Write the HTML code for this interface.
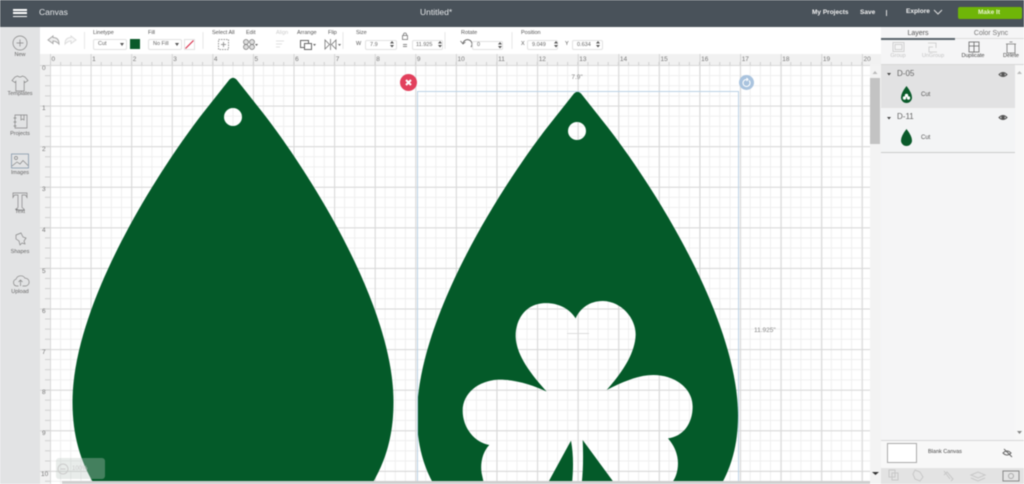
<!DOCTYPE html>
<html><head><meta charset="utf-8"><style>
html,body{margin:0;padding:0;width:1024px;height:484px;overflow:hidden;background:#fff;font-family:"Liberation Sans",sans-serif}
.a{position:absolute}
.t{position:absolute;white-space:nowrap;line-height:1;color:#555;font-size:5.5px}
.c{transform:translateX(-50%)}
.rh,.rv{position:absolute;white-space:nowrap;line-height:1;color:#777;font-size:6.5px}
.rh{top:57px}
.rv{left:42px}
.inp{position:absolute;background:#fff;border:1px solid #e2e2e2;border-radius:2px;box-sizing:border-box;height:10px;font-size:5.5px;line-height:8px;color:#666;padding-left:4px}
#wrap{position:relative;width:1024px;height:484px;overflow:hidden;filter:blur(.45px)}
</style></head><body><div id="wrap">
<div class="a" style="left:0;top:0;width:1024px;height:27px;background:#49525a"></div>
<div class="a" style="left:13px;top:9px;width:14px;height:1.500px;background:#fff"></div>
<div class="a" style="left:13px;top:12px;width:14px;height:1.500px;background:#fff"></div>
<div class="a" style="left:13px;top:15.500px;width:14px;height:1.500px;background:#fff"></div>
<div class="t" style="left:39px;top:7.500px;font-size:8.500px;color:#e6e8ea">Canvas</div>
<div class="t" style="left:420px;top:7.500px;font-size:8.500px;color:#e6e8ea">Untitled*</div>
<div class="t" style="left:812px;top:9.500px;font-size:6.500px;color:#f2f2f2;font-weight:bold">My Projects</div>
<div class="t" style="left:860px;top:9.500px;font-size:6.500px;color:#f2f2f2;font-weight:bold">Save</div>
<div class="a" style="left:886px;top:10px;width:1px;height:6px;background:#ddd"></div>
<div class="t" style="left:906px;top:9px;font-size:6.500px;color:#f2f2f2;font-weight:bold">Explore</div>
<svg class="a" style="left:933px;top:9px" width="10" height="6"><path d="M1 1L5 5L9 1" fill="none" stroke="#ddd" stroke-width="1"/></svg>
<div class="a" style="left:958px;top:7px;width:64px;height:12px;background:#6fb508;border-radius:2px"></div>
<div class="t c" style="left:989px;top:10px;font-size:6.500px;color:#e8f3d0;font-weight:bold">Make It</div>

<div class="a" style="left:0;top:27px;width:40px;height:457px;background:#e2e3e4"></div>
<div class="a" style="left:40px;top:27px;width:841px;height:27px;background:#fff"></div>

<svg class="a" style="left:0;top:27px" width="40" height="290" fill="none" stroke="#858585" stroke-width=".7">
<circle cx="20" cy="16" r="7"/><path d="M20 12.500v7M16.500 16h7"/>
<path d="M15 50l-3 3.500 3 2 .8-1.200V64h8.400V54.300l.8 1.200 3-2L25 50l-2.500-1q-2.500 2-5 0z"/>
<path d="M15 88h12v13H15zM13.500 91h3M13.500 95h3M13.500 99h3M21 88v5l1.500-1 1.500 1v-5"/>
<rect x="11.500" y="127" width="17" height="14" stroke="#7a8ea3"/><circle cx="16" cy="131" r="1.500"/><path d="M12 139l5-4 3 2 3-3.500 5 5"/>
<path d="M13 166h14v4.500l-1.500-2.500h-3.500v12.500l2 1.500v1h-8v-1l2-1.500V168h-3.500L13 170.500z"/>
<path d="M16 208l5-2 2 4 3 1-2 3 1 3-3-1-2 2-1-4-3-2z"/>
<path d="M16.500 259a3.500 3.500 0 0 1-.5-6.800a5 5 0 0 1 9-1a3.800 3.800 0 0 1 .5 7.800h-3M20.500 259v-6M18.500 255l2-2 2 2M16.500 259h2"/>
</svg>
<div class="t c" style="left:20px;top:53px;color:#666">New</div>
<div class="t c" style="left:20px;top:92px;color:#666">Templates</div>
<div class="t c" style="left:20px;top:132px;color:#666">Projects</div>
<div class="t c" style="left:20px;top:171px;color:#666">Images</div>
<div class="t c" style="left:20px;top:210px;color:#666">Text</div>
<div class="t c" style="left:20px;top:250px;color:#666">Shapes</div>
<div class="t c" style="left:20px;top:290px;color:#666">Upload</div>

<svg class="a" style="left:40px;top:27px" width="841" height="27" fill="none" stroke="#bbb" stroke-width="1">
<path d="M13 9l-5 4 5 3.500v-2.500q3 0 6 3q0-6.500-6-6.500z" fill="#eee" stroke="#aaa"/>
<path d="M31 9l5 4-5 3.500v-2.500q-3 0-6 3q0-6.500 6-6.500z" fill="#f8f8f8" stroke="#ddd"/>
<path d="M44.500 5v17M163 5v17M303 5v17M405 5v17M472 5v17" stroke="#e8e8e8"/>
<rect x="178.500" y="12.500" width="10" height="10" stroke="#999" stroke-dasharray="1.500 1"/><path d="M183.500 15v5M181 17.500h5" stroke="#999"/>
<g stroke="#777" fill="#ddd" stroke-width=".7"><circle cx="206" cy="15" r="2.500"/><circle cx="212" cy="15" r="2.500"/><circle cx="206" cy="20" r="2.500"/><circle cx="212" cy="20" r="2.500"/></g>
<path d="M236 14h8M236 17h6M236 20h4" stroke="#e0e0e0"/>
<rect x="260.500" y="13.500" width="8" height="7" stroke="#666"/><rect x="264.500" y="16.500" width="7" height="6" stroke="#666" fill="#fff"/>
<path d="M285 13v9l4.500-4.500zM296 13v9l-4.500-4.500zM290.500 12v11" stroke="#777" stroke-width=".8"/>
<path d="M215 17l3 0-1.500 2zM273 17l3 0-1.500 2zM298 17l3 0-1.500 2z" fill="#666" stroke="none"/>
<path d="M423 17a4.500 4.500 0 1 1 8 3" stroke="#666"/><path d="M420.500 14l2.500 3 2.500-2" stroke="#666" stroke-width=".8"/>
</svg>
<div class="t" style="left:93px;top:31px">Linetype</div>
<div class="inp" style="left:93px;top:39px;width:34px;height:11px;line-height:9px">Cut</div>
<div class="a" style="left:120px;top:43px;border:2px solid transparent;border-top:3px solid #555;border-bottom:0"></div>
<div class="a" style="left:130px;top:39px;width:10px;height:10px;background:#0b5a2a"></div>
<div class="t" style="left:148px;top:31px">Fill</div>
<div class="inp" style="left:148px;top:39px;width:34px;height:11px;line-height:9px">No Fill</div>
<div class="a" style="left:175px;top:43px;border:2px solid transparent;border-top:3px solid #555;border-bottom:0"></div>
<svg class="a" style="left:184px;top:39px" width="11" height="11"><rect x=".5" y=".5" width="10" height="10" fill="#fff" stroke="#e2e2e2"/><path d="M1.500 9.500L9.500 1.500" stroke="#d8344f" stroke-width="1.200"/></svg>
<div class="t" style="left:212px;top:31px">Select All</div>
<div class="t" style="left:246px;top:31px">Edit</div>
<div class="t" style="left:276px;top:31px;color:#ccc">Align</div>
<div class="t" style="left:297px;top:31px">Arrange</div>
<div class="t" style="left:328px;top:31px">Flip</div>
<div class="t" style="left:356px;top:31px">Size</div>
<div class="t" style="left:356px;top:42px">W</div>
<div class="inp" style="left:365px;top:39.500px;width:32px;height:10px;line-height:8px">7.9</div>
<div class="a" style="left:403px;top:44px;width:4px;height:1px;background:#888"></div>
<div class="a" style="left:403px;top:46px;width:4px;height:1px;background:#888"></div>
<div class="inp" style="left:412px;top:39.500px;width:31px;height:10px;line-height:8px;padding-left:3px">11.925</div>
<svg class="a" style="left:401px;top:32px" width="8" height="8" fill="none" stroke="#777" stroke-width=".8"><rect x="1.500" y="3.500" width="5" height="4"/><path d="M2.500 3.500v-1a1.500 1.500 0 0 1 3 0v1"/></svg>
<div class="t" style="left:461px;top:31px">Rotate</div>
<div class="inp" style="left:472px;top:41px;width:31px;height:9px;line-height:7px">0</div>
<div class="t" style="left:521px;top:31px">Position</div>
<div class="t" style="left:521px;top:42px">X</div>
<div class="inp" style="left:527px;top:39.500px;width:31px;height:10px;line-height:8px">9.049</div>
<div class="t" style="left:565px;top:42px">Y</div>
<div class="inp" style="left:572px;top:39.500px;width:31px;height:10px;line-height:8px">0.634</div>
<svg class="a" style="left:380px;top:39px" width="230" height="12" fill="#555"><path d="M10 4.500l2-2.500 2 2.500zM10 6l2 2.500 2-2.500zM58 4.500l2-2.500 2 2.500zM58 6l2 2.500 2-2.500zM118 5.500l2-2.500 2 2.500zM118 7l2 2.500 2-2.500zM174 4.500l2-2.500 2 2.500zM174 6l2 2.500 2-2.500zM216 4.500l2-2.500 2 2.500zM216 6l2 2.500 2-2.500z"/></svg>

<div class="a" style="left:40px;top:54px;width:841px;height:11px;background:#f1f1f1"></div>
<div class="a" style="left:40px;top:65px;width:10px;height:419px;background:#f1f1f1"></div>
<div class="a" style="left:50px;top:65px;width:820px;height:419px;background-color:#fff;background-image:linear-gradient(90deg,#d8d8d8 1px,transparent 1px),linear-gradient(#d8d8d8 1px,transparent 1px),linear-gradient(90deg,#efefef 1px,transparent 1px),linear-gradient(#efefef 1px,transparent 1px);background-size:40.6px 40.6px,40.6px 40.6px,10.15px 10.15px,10.15px 10.15px"></div>
<div class="a" style="left:50px;top:54px;width:820px;height:11px;background-image:linear-gradient(90deg,#d4d4d4 1px,transparent 1px);background-size:40.6px 11px"></div>
<div class="a" style="left:50px;top:62px;width:820px;height:3px;background-image:linear-gradient(90deg,#cfcfcf 1px,transparent 1px);background-size:10.15px 3px"></div>
<div class="a" style="left:40px;top:65px;width:10px;height:419px;background-image:linear-gradient(#d4d4d4 1px,transparent 1px);background-size:10px 40.6px"></div>
<div class="a" style="left:45px;top:65px;width:5px;height:419px;background-image:linear-gradient(#cfcfcf 1px,transparent 1px);background-size:5px 10.15px"></div>

<div class="rh" style="left:51.500px">0</div><div class="rh" style="left:92.100px">1</div><div class="rh" style="left:132.700px">2</div><div class="rh" style="left:173.300px">3</div><div class="rh" style="left:213.900px">4</div><div class="rh" style="left:254.500px">5</div><div class="rh" style="left:295.100px">6</div><div class="rh" style="left:335.700px">7</div><div class="rh" style="left:376.300px">8</div><div class="rh" style="left:416.900px">9</div><div class="rh" style="left:457.500px">10</div><div class="rh" style="left:498.100px">11</div><div class="rh" style="left:538.700px">12</div><div class="rh" style="left:579.300px">13</div><div class="rh" style="left:619.900px">14</div><div class="rh" style="left:660.500px">15</div><div class="rh" style="left:701.100px">16</div><div class="rh" style="left:741.700px">17</div><div class="rh" style="left:782.300px">18</div><div class="rh" style="left:822.900px">19</div><div class="rh" style="left:863.500px">20</div>
<div class="rv" style="top:65.500px">0</div><div class="rv" style="top:106.100px">1</div><div class="rv" style="top:146.700px">2</div><div class="rv" style="top:187.300px">3</div><div class="rv" style="top:227.900px">4</div><div class="rv" style="top:268.500px">5</div><div class="rv" style="top:309.100px">6</div><div class="rv" style="top:349.700px">7</div><div class="rv" style="top:390.300px">8</div><div class="rv" style="top:430.900px">9</div><div class="rv" style="top:471.500px;left:41px">10</div>

<svg class="a" style="left:0;top:0" width="870" height="484">
<defs>
<mask id="m1" maskUnits="userSpaceOnUse" x="0" y="0" width="870" height="484"><rect width="870" height="484" fill="#fff"/><circle cx="233" cy="117" r="9" fill="#000"/></mask>
<mask id="m2" maskUnits="userSpaceOnUse" x="0" y="0" width="870" height="484"><rect width="870" height="484" fill="#fff"/><circle cx="577" cy="131" r="9" fill="#000"/>
<path transform="translate(440,290) scale(.3333)" fill="#000" d="M407 85C385 50 345 36 305 40C255 45 226 90 227 140C229 200 280 260 320 305C280 285 225 268 175 269C115 272 68 310 68 362C68 415 105 458 148 465C128 485 120 520 125 550L132 582L322 582L393 452C400 490 401 530 396 582L425 582C430 540 430 490 428 450L525 582L692 582C710 565 718 530 712 500C707 475 695 458 684 445C730 440 758 400 758 350C758 295 705 255 640 255C590 255 540 280 500 300C540 255 585 195 587 135C588 85 545 35 490 33C450 32 420 55 407 85Z"/>
</mask>
</defs>
<g mask="url(#m1)"><path transform="translate(233,77)" fill="#045a29" d="M-3.500 2.500Q0 -1 3.500 2.500L30 36C72 90 160.500 225 160.500 325C160.500 360 152 385 139 407L-139 407C-152 385 -160.500 360 -160.500 325C-160.500 225 -72 90 -30 36Z"/></g>
<g mask="url(#m2)"><path transform="translate(577.500,91)" fill="#045a29" d="M-3.500 2.500Q0 -1 3.500 2.500L30 36C72 90 160.500 225 160.500 325C160.500 355 153 377 144 393L-144 393C-153 377 -160.500 355 -160.500 325C-160.500 225 -72 90 -30 36Z"/></g>
<path d="M417.500 484V91.500H738.500V484" fill="none" stroke="#bcd3e6" stroke-width="1"/>
<path d="M567 333.500h22" stroke="#ddd" stroke-width="1"/>
<circle cx="408.500" cy="82.500" r="8.500" fill="#e2405c"/><path d="M406 80l5 5M411 80l-5 5" stroke="#fff" stroke-width="2"/>
<circle cx="746.500" cy="82.500" r="7.500" fill="#a9c3de"/><path d="M749 80.500a3.500 3.500 0 1 1-2-1M746.500 78l1.500 1.500-1.500 1.500" fill="none" stroke="#fff" stroke-width="1"/>
</svg>
<div class="t c" style="left:577px;top:75px;color:#888;font-size:6.500px">7.9"</div>
<div class="t" style="left:754px;top:328px;color:#888;font-size:6.500px">11.925"</div>

<div class="a" style="left:56px;top:458px;width:49px;height:21px;border-radius:3px;background:rgba(190,200,195,.35)"></div>
<svg class="a" style="left:57px;top:463px" width="12" height="12"><circle cx="6" cy="6" r="5" fill="none" stroke="#ccc"/><path d="M3.500 6h5" stroke="#ccc"/></svg>
<div class="t" style="left:72px;top:466px;color:#ccc;font-size:6px">100%</div>
<div class="a" style="left:62px;top:481px;width:808px;height:3px;background:#cfcfcf"></div>

<div class="a" style="left:870px;top:65px;width:11px;height:419px;background:#f3f3f3"></div>
<div class="a" style="left:870px;top:78px;width:10px;height:66px;background:#c3c3c3"></div>
<svg class="a" style="left:870px;top:70px" width="11" height="6"><path d="M2.500 4L5 1l2.500 3z" fill="#bbb"/></svg>

<div class="a" style="left:881px;top:27px;width:143px;height:457px;background:#f5f5f6"></div>
<div class="a" style="left:881px;top:38px;width:74px;height:1.500px;background:#5a646c"></div>
<div class="a" style="left:955px;top:38px;width:69px;height:1px;background:#ddd"></div>
<div class="t c" style="left:918px;top:30px;font-size:7px">Layers</div>
<div class="t c" style="left:991px;top:30px;font-size:7px;color:#777">Color Sync</div>
<svg class="a" style="left:881px;top:40px" width="143" height="20" fill="none" stroke="#c8c8c8" stroke-width=".8">
<rect x="12" y="2.500" width="11" height="9"/><rect x="14" y="4.500" width="7" height="5"/>
<path d="M47 3h8v5M52 7h-4v5h8"/>
<rect x="88" y="2" width="10" height="10" stroke="#666"/><path d="M88 6h10M93 2v10" stroke="#666"/>
<path d="M125 4h10M126 4v9h8v-9M128.500 2h3" stroke="#777"/>
</svg>
<div class="t c" style="left:898px;top:54px;color:#c4c4c4">Group</div>
<div class="t c" style="left:933px;top:54px;color:#c4c4c4">UnGroup</div>
<div class="t c" style="left:973px;top:54px;color:#444">Duplicate</div>
<div class="t c" style="left:1011px;top:54px;color:#444">Delete</div>
<div class="a" style="left:881px;top:64px;width:143px;height:1px;background:#d8d8d8"></div>
<div class="a" style="left:881px;top:65px;width:134px;height:43px;background:#e2e2e3"></div>
<div class="a" style="left:881px;top:108px;width:134px;height:44px;background:#f3f4f5"></div>
<div class="a" style="left:881px;top:152px;width:134px;height:1px;background:#ccc"></div>
<div class="a" style="left:1015px;top:65px;width:9px;height:375px;background:#f7f7f7"></div>
<svg class="a" style="left:1015px;top:70px" width="9" height="6"><path d="M2 4L4.500 1 7 4z" fill="#bbb"/></svg>
<svg class="a" style="left:1015px;top:430px" width="9" height="6"><path d="M2 1L4.500 4 7 1z" fill="#888"/></svg>
<svg class="a" style="left:881px;top:65px" width="134" height="90">
<path d="M6 8h4l-2 2.500zM6 52h4l-2 2.500z" fill="#444"/>
<g transform="translate(25.500,21)"><path d="M0 0q-5.500 7-5.500 11.500a5.500 5.500 0 0 0 11 0q0-4.500-5.500-11.500z" fill="#0a5a2a"/><circle cx="-2" cy="12" r="1.700" fill="#fff"/><circle cx="2" cy="12" r="1.700" fill="#fff"/><circle cx="0" cy="9.500" r="1.700" fill="#fff"/></g>
<g transform="translate(25.500,64)"><path d="M0 0q-5.500 7-5.500 11.500a5.500 5.500 0 0 0 11 0q0-4.500-5.500-11.500z" fill="#0a5a2a"/></g>
<g fill="none" stroke="#555"><path d="M118 9.500q4-4 8 0q-4 4-8 0zM118 52.500q4-4 8 0q-4 4-8 0z"/></g><circle cx="122" cy="9.500" r="1.800" fill="#555"/><circle cx="122" cy="52.500" r="1.800" fill="#555"/>
</svg>
<div class="t" style="left:897px;top:70px;font-size:8px;color:#666">D-05</div>
<div class="t" style="left:897px;top:113px;font-size:8px;color:#666">D-11</div>
<div class="t" style="left:921px;top:92px;color:#555;font-size:6px">Cut</div>
<div class="t" style="left:921px;top:135px;color:#555;font-size:6px">Cut</div>
<div class="a" style="left:881px;top:440px;width:143px;height:1px;background:#d8d8d8"></div>
<div class="a" style="left:881px;top:441px;width:143px;height:27px;background:#f8f8f8"></div>
<div class="a" style="left:887px;top:443px;width:30px;height:20px;background:#fff;border:1px solid #aaa;box-sizing:border-box"></div>
<div class="t" style="left:928px;top:449.500px;color:#444">Blank Canvas</div>
<svg class="a" style="left:1002px;top:448px" width="12" height="10"><path d="M1 5q4-4 8 0q-4 4-8 0zM2 1l8 8" fill="none" stroke="#666"/></svg>
<div class="a" style="left:881px;top:468px;width:143px;height:16px;background:#e3e3e3"></div>
<svg class="a" style="left:870px;top:468px" width="154" height="16" fill="none" stroke="#c8c8c8"><path d="M2 4h7l-3.500 3z" fill="#333" stroke="none"/><rect x="19" y="2" width="6" height="7"/><rect x="22" y="5" width="6" height="7"/><path d="M45 2l5 2 3 5-3 4-5-2-2-5zM74 3l6 8M74 7l3-3 6 7-2 2M101 7l7-3 7 3-7 3zM101 10l7 3 7-3"/><rect x="133" y="3" width="16" height="10" stroke="#888"/><circle cx="141" cy="8" r="2.500" stroke="#aaa"/></svg>
</div></body></html>
